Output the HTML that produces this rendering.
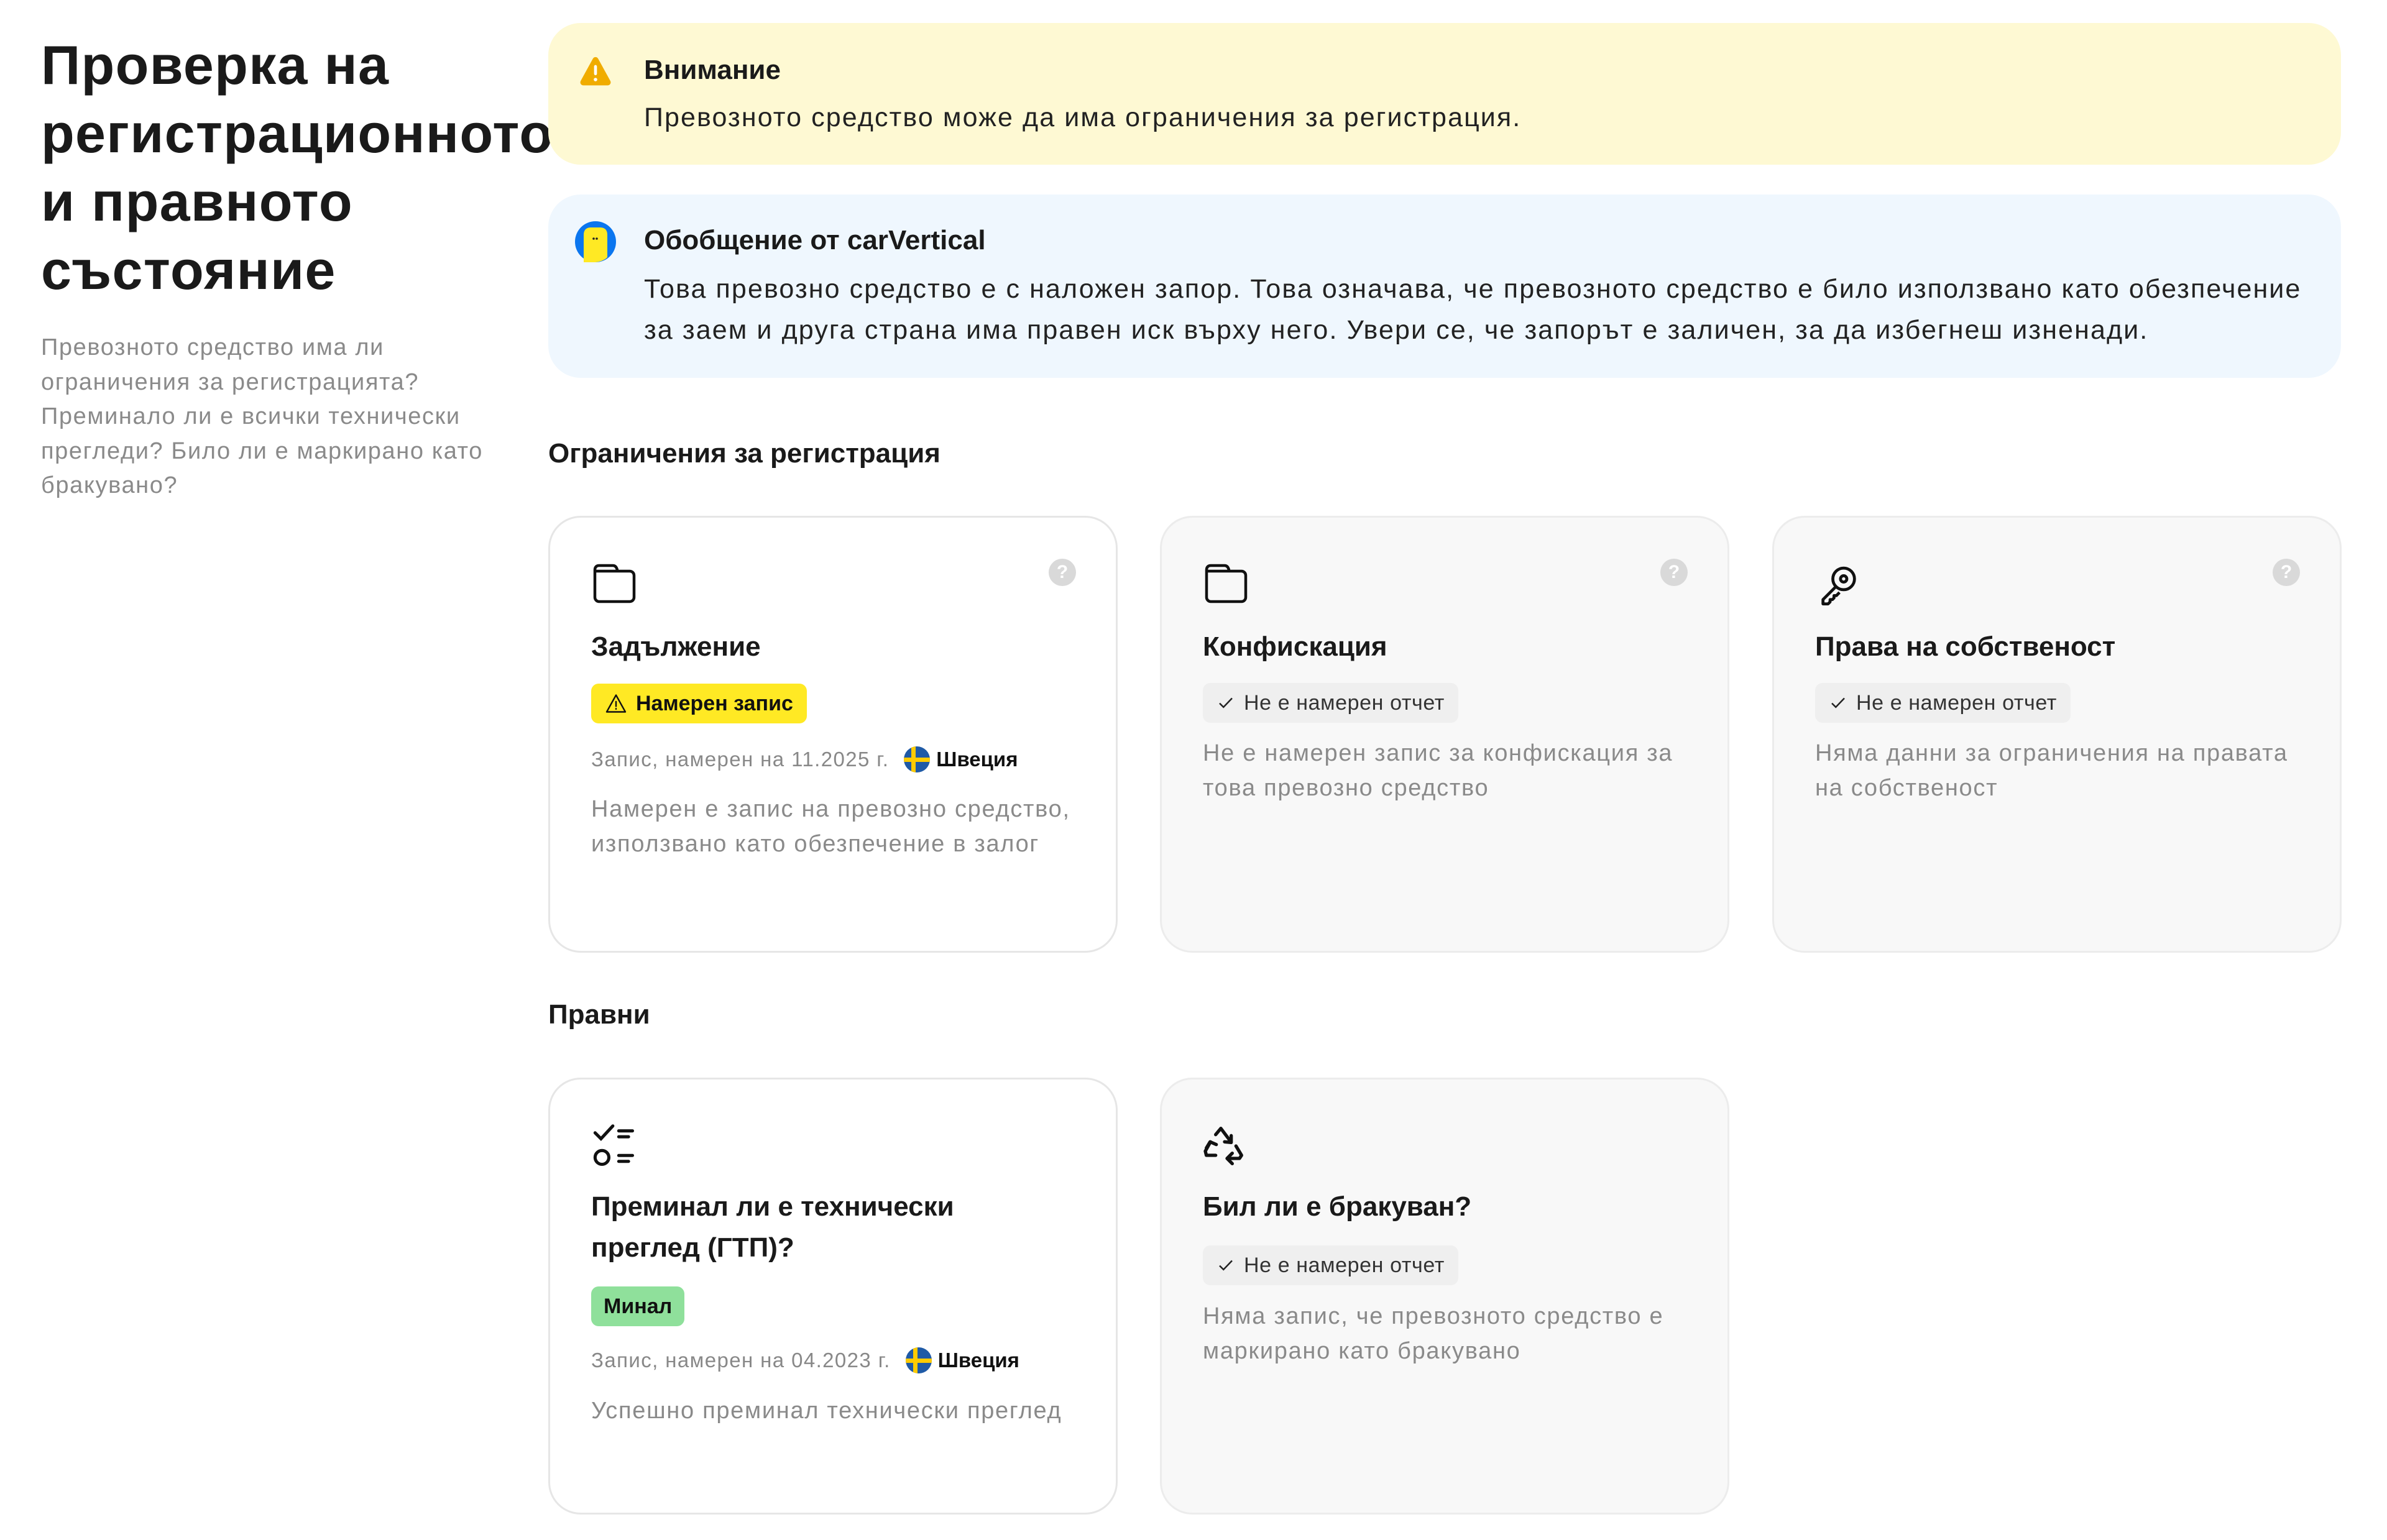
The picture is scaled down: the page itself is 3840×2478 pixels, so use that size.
<!DOCTYPE html>
<html><head><meta charset="utf-8">
<style>
*{margin:0;padding:0;box-sizing:border-box}
body{width:3840px;height:2478px;background:#fff;font-family:"Liberation Sans",Arial,sans-serif;color:#1a1a1a;position:relative;overflow:hidden}
.a{position:absolute}
h1{position:absolute;left:66px;top:50px;font-size:88px;line-height:110px;font-weight:700;letter-spacing:1.3px;color:#1a1a1a}
.sub{left:66px;top:532px;width:760px;font-size:38px;line-height:55.5px;color:#8a8a8a;letter-spacing:1.6px}
.box{border-radius:52px}
.bt{font-size:44px;font-weight:700;color:#1a1a1a}
.bd{font-size:43px;line-height:66px;color:#222;letter-spacing:2.1px}
.card{position:absolute;width:916px;height:703px;border-radius:52px;border:3px solid #e6e6e6}
.w{background:#fff}.g{background:#f8f8f8;border-color:#ececec}
.ct{position:absolute;left:66px;font-size:44px;font-weight:700;line-height:66px;color:#1a1a1a}
.bad{position:absolute;left:66px;height:64px;border-radius:12px;font-size:34px;line-height:64px;padding:0 22px;display:flex;align-items:center;gap:14px}
.ok{background:#efefef;color:#333;letter-spacing:0.6px}
.found{background:#ffe924;color:#111;font-weight:700}
.pass{background:#8fe09b;color:#111;font-weight:700}
.meta{position:absolute;left:66px;font-size:33px;color:#888;display:flex;align-items:center;white-space:nowrap;letter-spacing:1.4px}
.meta b{color:#111;font-weight:700;margin-left:10px;letter-spacing:0}
.desc{position:absolute;left:66px;font-size:38px;line-height:55.5px;color:#8a8a8a;width:800px;letter-spacing:1.7px}
.help{position:absolute;right:64px;top:66px;width:44px;height:44px;border-radius:50%;background:#d9d9d9;color:#fff;font-size:30px;font-weight:700;text-align:center;line-height:44px}
.sec{font-size:44px;font-weight:700;color:#1a1a1a}
.ic{position:absolute;left:66px;top:70px}
</style></head><body>
<h1>Проверка на<br>регистрационното<br>и правното<br>състояние</h1>
<div class="a sub">Превозното средство има ли ограничения за регистрацията? Преминало ли е всички технически прегледи? Било ли е маркирано като бракувано?</div>

<div class="a box" style="left:882px;top:37px;width:2884px;height:228px;background:#fef9d3"></div>
<svg class="a" style="left:930px;top:86px" width="56" height="56" viewBox="0 0 24 24"><path d="M12 2.5c.8 0 1.4.4 1.8 1.1l8.4 15.3c.8 1.4-.2 3.1-1.8 3.1H3.6c-1.6 0-2.6-1.7-1.8-3.1l8.4-15.3c.4-.7 1-1.1 1.8-1.1z" fill="#f0ac00"/><rect x="11" y="8" width="2" height="7" rx="1" fill="#fff"/><circle cx="12" cy="18" r="1.2" fill="#fff"/></svg>
<div class="a bt" style="left:1036px;top:88px">Внимание</div>
<div class="a bd" style="left:1036px;top:156px">Превозното средство може да има ограничения за регистрация.</div>

<div class="a box" style="left:882px;top:313px;width:2884px;height:295px;background:#eff7fe"></div>
<svg class="a" style="left:925px;top:356px" width="66" height="66" viewBox="0 0 66 66"><circle cx="33" cy="33" r="33" fill="#0b76ef"/><path d="M14 66V22c0-8 4-12 12-12h14c8 0 12 4 12 12v36c-6 6-16 8-20 8z" fill="#ffe924"/><circle cx="30" cy="28" r="1.8" fill="#222"/><circle cx="35" cy="28" r="1.8" fill="#222"/></svg>
<div class="a bt" style="left:1036px;top:362px">Обобщение от carVertical</div>
<div class="a bd" style="left:1036px;top:432px;width:2700px">Това превозно средство е с наложен запор. Това означава, че превозното средство е било използвано като обезпечение за заем и друга страна има правен иск върху него. Увери се, че запорът е заличен, за да избегнеш изненади.</div>

<div class="a sec" style="left:882px;top:705px">Ограничения за регистрация</div>

<div class="card w" style="left:882px;top:830px">
 <svg class="ic" width="76" height="70" viewBox="0 0 76 70" fill="none" stroke="#111" stroke-width="4.5" stroke-linejoin="round"><path d="M6 14c0-4 2-7 7-7h22c4 0 6 3 7 7v2h-36M6 14v44c0 4 3 7 7 7h49c4 0 7-3 7-7V23c0-4-3-7-7-7H6"/></svg>
 <div class="help">?</div>
 <div class="ct" style="top:175px">Задължение</div>
 <div class="bad found" style="top:267px"><svg width="36" height="36" viewBox="0 0 24 24" fill="none" stroke="#111" stroke-width="1.6" stroke-linejoin="round"><path d="M12 3L2 21h20z"/><path d="M12 10v5M12 17.5v.5" stroke-linecap="round"/></svg>Намерен запис</div>
 <div class="meta" style="top:368px">Запис, намерен на 11.2025 г.<svg style="margin-left:24px" width="42" height="42" viewBox="0 0 42 42"><clipPath id="c1"><circle cx="21" cy="21" r="21"/></clipPath><g clip-path="url(#c1)"><rect width="42" height="42" fill="#1f5aa6"/><rect x="12" width="7" height="42" fill="#fecb00"/><rect y="18" width="42" height="7" fill="#fecb00"/></g></svg><b>Швеция</b></div>
 <div class="desc" style="top:442px">Намерен е запис на превозно средство, използвано като обезпечение в залог</div>
</div>
<div class="card g" style="left:1866px;top:830px">
 <svg class="ic" width="76" height="70" viewBox="0 0 76 70" fill="none" stroke="#111" stroke-width="4.5" stroke-linejoin="round"><path d="M6 14c0-4 2-7 7-7h22c4 0 6 3 7 7v2h-36M6 14v44c0 4 3 7 7 7h49c4 0 7-3 7-7V23c0-4-3-7-7-7H6"/></svg>
 <div class="help">?</div>
 <div class="ct" style="top:175px">Конфискация</div>
 <div class="bad ok" style="top:266px"><svg width="30" height="30" viewBox="0 0 24 24" fill="none" stroke="#222" stroke-width="2"><path d="M4 12.5l5 5L20 6"/></svg>Не е намерен отчет</div>
 <div class="desc" style="top:352px">Не е намерен запис за конфискация за това превозно средство</div>
</div>
<div class="card g" style="left:2851px;top:830px">
 <svg class="ic" width="76" height="76" viewBox="0 0 24 24" fill="none" stroke="#111" stroke-width="1.5" stroke-linejoin="round"><circle cx="14.5" cy="9" r="5.5"/><circle cx="14.5" cy="9" r="1.6"/><path d="M10.6 12.9L4 19.5v2.2h2.6l1-1 0-1.2 1.2 0 .8-.8v-1.2h1.2l1.6-1.6"/></svg>
 <div class="help">?</div>
 <div class="ct" style="top:175px">Права на собственост</div>
 <div class="bad ok" style="top:266px"><svg width="30" height="30" viewBox="0 0 24 24" fill="none" stroke="#222" stroke-width="2"><path d="M4 12.5l5 5L20 6"/></svg>Не е намерен отчет</div>
 <div class="desc" style="top:352px">Няма данни за ограничения на правата на собственост</div>
</div>

<div class="a sec" style="left:882px;top:1608px">Правни</div>

<div class="card w" style="left:882px;top:1734px">
 <svg class="ic" style="top:70px" width="76" height="76" viewBox="0 0 24 24" fill="none" stroke="#111" stroke-width="1.6" stroke-linecap="round"><path d="M2 5l3 3 6-6.5M14 4h7M14 7h5"/><circle cx="5.5" cy="17.5" r="3.5"/><path d="M14 16.5h7M14 19.5h5"/></svg>
 <div class="ct" style="top:172px;width:700px">Преминал ли е технически преглед (ГТП)?</div>
 <div class="bad pass" style="top:333px;padding:0 20px">Минал</div>
 <div class="meta" style="top:431px">Запис, намерен на 04.2023 г.<svg style="margin-left:24px" width="42" height="42" viewBox="0 0 42 42"><clipPath id="c2"><circle cx="21" cy="21" r="21"/></clipPath><g clip-path="url(#c2)"><rect width="42" height="42" fill="#1f5aa6"/><rect x="12" width="7" height="42" fill="#fecb00"/><rect y="18" width="42" height="7" fill="#fecb00"/></g></svg><b>Швеция</b></div>
 <div class="desc" style="top:506px">Успешно преминал технически преглед</div>
</div>
<div class="card g" style="left:1866px;top:1734px">
 <svg class="ic" style="left:60px;top:72px" width="80" height="80" viewBox="0 0 24 24" fill="none" stroke="#111" stroke-width="1.6" stroke-linecap="round" stroke-linejoin="round"><path d="M8 5l2.5-3 4.5 6M15.5 5.5l0 3.3-3.2-.3"/><path d="M8 15H3.5l-.5-2 2.5-4.5M3.5 11.5l1.8-3 3 1.3"/><path d="M14 16.5h5.5l1-1.5-2.7-4.5M16 14l-2.5 2.5 2.5 2.5"/></svg>
 <div class="ct" style="top:172px">Бил ли е бракуван?</div>
 <div class="bad ok" style="top:267px"><svg width="30" height="30" viewBox="0 0 24 24" fill="none" stroke="#222" stroke-width="2"><path d="M4 12.5l5 5L20 6"/></svg>Не е намерен отчет</div>
 <div class="desc" style="top:354px">Няма запис, че превозното средство е маркирано като бракувано</div>
</div>
</body></html>
